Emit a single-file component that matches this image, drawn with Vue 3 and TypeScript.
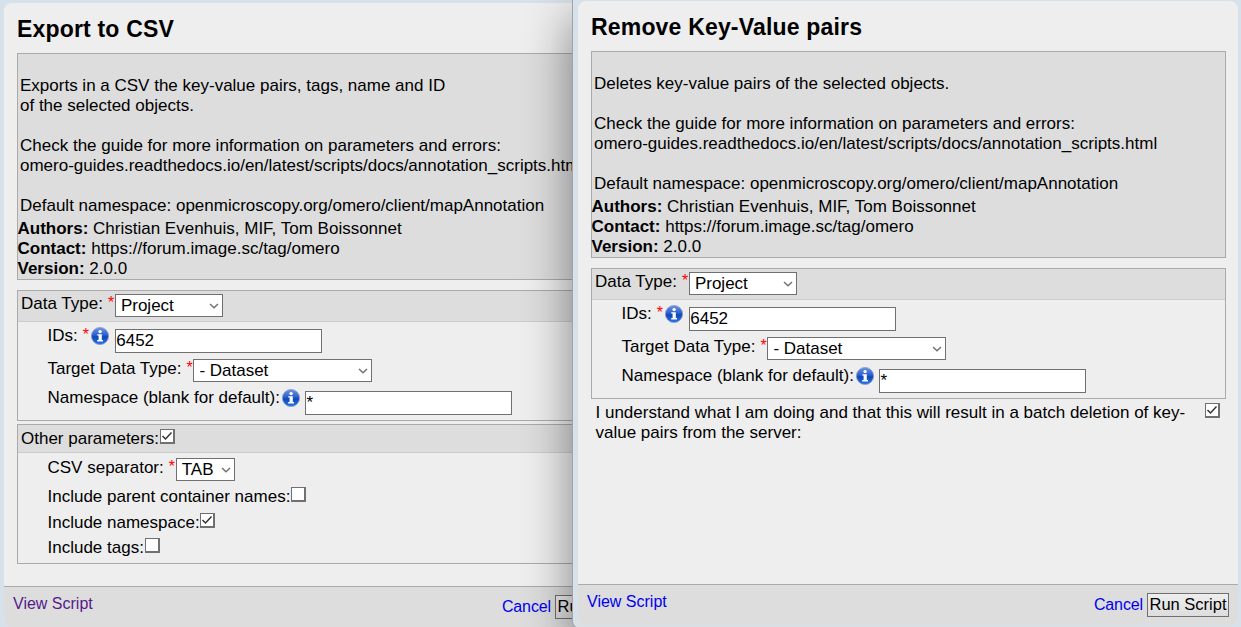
<script setup lang="ts">
type Kind = 'select' | 'text' | 'check'

interface Field {
  id: string
  label: string
  kind: Kind
  value?: string
  checked?: boolean
  required?: boolean
  info?: boolean
}

interface Group {
  id: string
  head: Field
  rows: Field[]
}

interface Dialog {
  id: string
  title: string
  summary: string[]
  groups: Group[]
  confirm?: string
}

const guide: string[] = [
  '',
  'Check the guide for more information on parameters and errors:',
  'omero-guides.readthedocs.io/en/latest/scripts/docs/annotation_scripts.html',
  '',
  'Default namespace: openmicroscopy.org/omero/client/mapAnnotation',
]

const credits = [
  { key: 'Authors:', value: 'Christian Evenhuis, MIF, Tom Boissonnet' },
  { key: 'Contact:', value: 'https://forum.image.sc/tag/omero' },
  { key: 'Version:', value: '2.0.0' },
]

const target: Group = {
  id: 'target',
  head: { id: 'type', label: 'Data Type:', kind: 'select', value: 'Project', required: true },
  rows: [
    { id: 'ids', label: 'IDs:', kind: 'text', value: '6452', required: true, info: true },
    { id: 'dataset', label: 'Target Data Type:', kind: 'select', value: '- Dataset', required: true },
    { id: 'ns', label: 'Namespace (blank for default):', kind: 'text', value: '*', info: true },
  ],
}

const dialogs: Dialog[] = [
  {
    id: 'export',
    title: 'Export to CSV',
    summary: ['Exports in a CSV the key-value pairs, tags, name and ID', 'of the selected objects.', ...guide],
    groups: [
      target,
      {
        id: 'other',
        head: { id: 'more', label: 'Other parameters:', kind: 'check', checked: true },
        rows: [
          { id: 'sep', label: 'CSV separator:', kind: 'select', value: 'TAB', required: true },
          { id: 'parents', label: 'Include parent container names:', kind: 'check' },
          { id: 'incns', label: 'Include namespace:', kind: 'check', checked: true },
          { id: 'tags', label: 'Include tags:', kind: 'check' },
        ],
      },
    ],
  },
  {
    id: 'remove',
    title: 'Remove Key-Value pairs',
    summary: ['Deletes key-value pairs of the selected objects.', ...guide],
    groups: [target],
    confirm:
      'I understand what I am doing and that this will result in a batch deletion of key-value pairs from the server:',
  },
]
</script>

<template>
  <main class="desktop">
    <section v-for="d in dialogs" :key="d.id" class="window" :class="d.id">
      <div class="panel">
        <h1>{{ d.title }}</h1>
        <div class="about">
          <div class="summary">
            <p v-for="(line, i) in d.summary" :key="i">{{ line }}</p>
          </div>
          <p v-for="c in credits" :key="c.key" class="credit"><b>{{ c.key }}</b> {{ c.value }}</p>
        </div>

        <div v-for="g in d.groups" :key="g.id" class="group" :class="'g-' + g.id">
          <div
            v-for="(f, i) in [g.head, ...g.rows]"
            :key="f.id"
            class="row"
            :class="[f.kind, 'f-' + f.id, { head: i === 0 }]"
          >
            <label>{{ f.label }}</label>
            <span v-if="f.required" class="star">*</span>
            <svg v-if="f.info" class="info" viewBox="0 0 18 18">
              <defs>
                <linearGradient id="orb" x1="0" y1="0" x2="0" y2="1">
                  <stop offset="0" stop-color="#6f95e0" />
                  <stop offset="0.45" stop-color="#2a5fcf" />
                  <stop offset="0.55" stop-color="#1046b8" />
                  <stop offset="1" stop-color="#2a78ea" />
                </linearGradient>
              </defs>
              <circle cx="9" cy="9" r="8.6" fill="url(#orb)" stroke="#8b9cc8" stroke-width="0.8" />
              <circle cx="9.1" cy="4.6" r="1.7" fill="#fff" />
              <path d="M6.3 7.2H10.8V13H12V14.4H6.2V13H7.6V8.6H6.3Z" fill="#fff" />
            </svg>
            <span v-if="f.kind === 'select'" class="pick">
              <select><option>{{ f.value }}</option></select>
              <svg class="chev" viewBox="0 0 10 6"><path d="M1 1L5 4.8L9 1" /></svg>
            </span>
            <input v-else-if="f.kind === 'text'" class="box" type="text" :value="f.value" />
            <span v-else class="tick">
              <svg v-if="f.checked" viewBox="0 0 12 12"><path d="M1.5 6L4.5 9L10.5 2.5" /></svg>
            </span>
          </div>
        </div>

        <div v-if="d.confirm" class="confirm">
          <p>{{ d.confirm }}</p>
          <span class="tick">
            <svg viewBox="0 0 12 12"><path d="M1.5 6L4.5 9L10.5 2.5" /></svg>
          </span>
        </div>

        <footer>
          <a class="view">View Script</a>
          <a class="cancel">Cancel</a>
          <button type="button">Run Script</button>
        </footer>
      </div>
    </section>
  </main>
</template>

<style>
html,
body {
  overflow: hidden;
}
</style>

<style scoped>
* {
  box-sizing: border-box;
}
.desktop {
  position: relative;
  width: 1241px;
  height: 627px;
  overflow: hidden;
  background: #d7e1ea;
  font: 17px/20px 'Liberation Sans', Arial, sans-serif;
  color: #000;
}
p,
h1 {
  margin: 0;
}
.window {
  position: absolute;
  background: #d7e1ea;
  height: 630px;
}
.export {
  left: -1px;
  top: 2px;
  width: 574px;
  padding: 1px 0 4px 5px;
  overflow: hidden;
}
.remove {
  left: 572px;
  top: -1px;
  width: 671px;
  padding: 1px 0 0 5px;
  border: 1px solid #a0a4a8;
  border-radius: 0 0 0 8px;
  box-shadow: 0 18px 48px 0 rgba(0, 0, 0, 0.46);
}
.panel {
  display: flex;
  flex-direction: column;
  width: 660px;
  height: 625px;
  padding: 0 12px 0 13px;
  border-radius: 8px;
  background: #eee;
  overflow: hidden;
}
.export .panel {
  width: 642px;
}
h1 {
  height: 50px;
  padding-top: 13px;
  font-size: 23px;
  line-height: 27px;
  letter-spacing: 0.18px;
  white-space: nowrap;
}
.about {
  height: 207px;
  border: 1px solid #aaa;
  background: #ddd;
  white-space: nowrap;
}
.export .about {
  height: 227px;
}
.summary {
  padding: 22px 2px 3px;
}
.summary p {
  height: 20px;
}
.credit {
  margin-left: -0.5px;
}
.group {
  border: 1px solid #aaa;
  margin-top: 10px;
}
.g-other {
  margin-top: 3px;
}
.row {
  display: flex;
  align-items: flex-start;
  height: 29px;
  margin-left: 29.5px;
  white-space: nowrap;
}
.row.text {
  height: 33px;
}
.row.check {
  height: 26px;
}
.row.f-incns {
  height: 25px;
}
.row.head {
  height: 31px;
  margin: 0 0 3px;
  padding: 2px 0 0 3px;
  background: #ddd;
  border-bottom: 1px solid #ccc;
}
.g-other .row.head {
  height: 28px;
  margin-bottom: 4px;
  padding-top: 3px;
}
label {
  margin-top: 1px;
}
.star {
  margin-left: 5px;
  color: #f00;
  font-size: 16px;
  line-height: 19px;
  width: 7px;
}
.info {
  width: 18px;
  height: 18px;
  margin: 2px 0 0 2px;
}
.f-ids .info {
  margin-left: 1px;
}
.pick {
  display: flex;
  position: relative;
  margin-top: 1px;
  width: 108px;
  height: 23px;
}
.f-dataset .pick {
  width: 179px;
}
.f-sep .pick {
  width: 59px;
}
select {
  appearance: none;
  width: 100%;
  margin: 0;
  padding: 0 5px;
  border: 1px solid #707070;
  border-radius: 0;
  background: #fff;
  color: #000;
  font: inherit;
}
.chev {
  position: absolute;
  right: 4px;
  top: 9px;
  width: 10px;
  height: 6px;
  fill: none;
  stroke: #707070;
  stroke-width: 1.4;
}
.box {
  width: 207px;
  height: 24px;
  margin: 4px 0 0 5px;
  padding: 0 1px 0 0.5px;
  border: 1px solid #707070;
  background: #fff;
  color: #000;
  font: inherit;
}
.f-ids .box {
  margin-left: 6px;
}
.tick {
  flex: none;
  width: 15px;
  height: 15px;
  margin: 1px 0 0 0.6px;
  border: solid #707070;
  border-width: 1px 2px 2px 1px;
  background: #fff;
}
.f-incns .tick {
  margin-left: 0;
}
.tick svg {
  display: block;
  width: 12px;
  height: 12px;
  fill: none;
  stroke: #333;
  stroke-width: 1.5;
}
.confirm {
  display: flex;
  justify-content: space-between;
  padding: 3px 6px 0 4.5px;
}
.confirm p {
  width: 600px;
  margin-top: 1px;
}
footer {
  display: flex;
  align-items: flex-start;
  height: 42px;
  margin: auto -12px 0 -13px;
  padding: 7px 9px 0;
  border-top: 1px solid #aaa;
  background: #ddd;
  font-size: 16px;
}
.view {
  color: #551a8b;
}
.remove .view,
.cancel {
  color: #00e;
}
.cancel {
  margin: 3px 4px 0 auto;
  letter-spacing: -0.12px;
}
button {
  width: 82px;
  height: 24px;
  margin: 1px 0 0;
  padding: 0 0 2px;
  border: 1px solid #707070;
  border-radius: 0;
  background: linear-gradient(#eee, #ddd);
  color: #000;
  font: inherit;
  font-size: 16.5px;
}
</style>
